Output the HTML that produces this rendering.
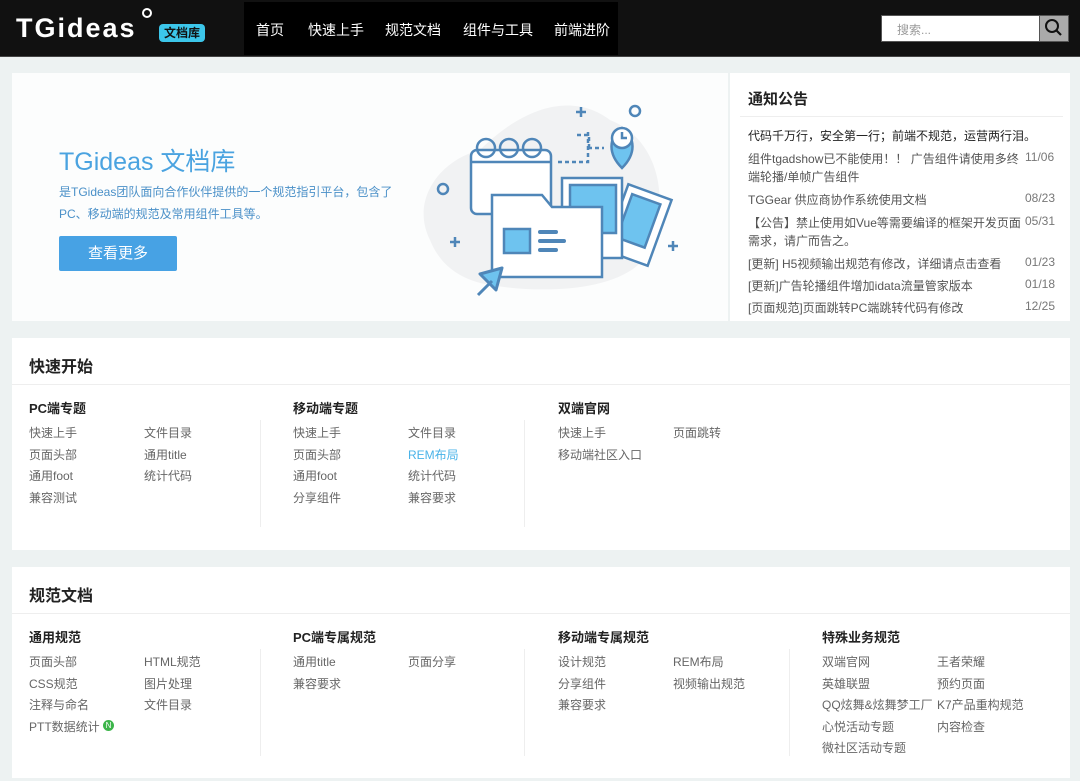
<!DOCTYPE html>
<html><head><meta charset="utf-8"><style>
*{margin:0;padding:0;box-sizing:border-box}
body{width:1080px;height:781px;background:#edf2f2;font-family:"Liberation Sans","Noto Sans CJK SC",sans-serif;position:relative;overflow:hidden;color:#333}
.a{position:absolute;white-space:nowrap}
.hd{position:absolute;left:0;top:0;width:1080px;height:57px;background:#111;border-bottom:1px solid #444}
.nav{position:absolute;left:244px;top:2px;width:374px;height:53px;background:#000}
.nav span{position:absolute;top:18px;color:#fff;font-size:14px}
.card{position:absolute;background:#fff}
.t{font-size:13px;font-weight:bold;color:#222}
.l{font-size:12px;color:#666}
.ttl{font-size:16px;font-weight:bold;color:#222}
.dv{position:absolute;width:1px;background:#eee}
.n{font-size:12px;color:#555;white-space:normal;width:280px}
.d{font-size:12px;color:#777}
</style></head><body>
<div class="hd">
<div class="a" style="left:16px;top:13px;color:#fff;font-size:27px;font-weight:bold;letter-spacing:2px">TGideas</div>
<div class="a" style="left:142px;top:8px;width:10px;height:10px;border:2px solid #fff;border-radius:50%"></div>
<div class="a" style="left:159px;top:24px;width:46px;height:18px;background:#3cc6ea;border-radius:4px;color:#111;font-size:12px;font-weight:bold;text-align:center;line-height:18px">文档库</div>
<div class="nav"><span style="left:12px">首页</span><span style="left:64px">快速上手</span><span style="left:141px">规范文档</span><span style="left:219px">组件与工具</span><span style="left:310px">前端进阶</span></div>
<div class="a" style="left:881px;top:15px;width:159px;height:27px;background:#fff;border:1px solid #555"></div>
<div class="a" style="left:897px;top:21px;color:#999;font-size:12px">搜索...</div>
<div class="a" style="left:1039px;top:15px;width:30px;height:27px;background:#aaa;border:1px solid #555"></div>
<svg class="a" style="left:1044px;top:18px" width="20" height="20" viewBox="0 0 20 20"><circle cx="8" cy="8" r="6" fill="none" stroke="#111" stroke-width="2"/><path d="M12.5 12.5L17 17" stroke="#111" stroke-width="2.2"/></svg>
</div>

<div class="card" style="left:12px;top:73px;width:716px;height:248px;background:#fcfdfd"></div>
<div class="a" style="left:59px;top:142px;font-size:25px;color:#4aa3e0">TGideas 文档库</div>
<div class="a" style="left:59px;top:181px;font-size:12px;color:#4a90c8;line-height:22px">是TGideas团队面向合作伙伴提供的一个规范指引平台，包含了<br>PC、移动端的规范及常用组件工具等。</div>
<div class="a" style="left:59px;top:236px;width:118px;height:35px;background:#47a2e4;border-radius:2px;color:#fff;font-size:15px;text-align:center;line-height:35px">查看更多</div>
<svg class="a" style="left:400px;top:80px" width="300" height="230" viewBox="0 0 300 230">
<path d="M30 160C10 120 40 80 80 70C120 30 170 10 210 40C260 60 270 120 250 170C230 210 150 215 90 205C60 200 40 185 30 160Z" fill="#f1f2f3"/>
<g fill="none" stroke="#4f86b8" stroke-width="2.5">
<path d="M181 27v10M176 32h10M55 157v10M50 162h10M273 161v10M268 166h10"/>
<circle cx="235" cy="31" r="5"/><circle cx="43" cy="109" r="5"/>
<rect x="71" y="70" width="80" height="64" rx="6" fill="#fff"/>
<path d="M71 82h80"/>
<circle cx="86" cy="68" r="9"/><circle cx="109" cy="68" r="9"/><circle cx="132" cy="68" r="9"/>
<path d="M158 82h30v-30M177 55h12v12M188 68h16" stroke-dasharray="4 3"/>
<path d="M222 88c-14-14-14-30 0-40c14 10 14 26 0 40z" fill="#6ec3ef"/>
<circle cx="222" cy="58" r="10" fill="#fff"/><path d="M222 52v6h5"/>
<rect x="215" y="110" width="46" height="70" transform="rotate(20 238 145)" fill="#fff"/>
<rect x="222" y="118" width="30" height="46" transform="rotate(20 238 145)" fill="#6ec3ef"/>
<rect x="162" y="98" width="60" height="80" fill="#fff"/><rect x="170" y="105" width="46" height="48" fill="#6ec3ef"/>
<path d="M92 115h50l10 12h50v70h-110z" fill="#fff"/>
<rect x="104" y="149" width="26" height="24" fill="#6ec3ef"/>
<path d="M140 152h16M140 161h24M140 170h16" stroke-width="4" stroke-linecap="round"/>
<path d="M78 215l14-14M102 188l-22 6l16 16z" fill="#6ec3ef" stroke-width="3" stroke-linejoin="round"/>
</g></svg>

<div class="card" style="left:730px;top:73px;width:340px;height:248px"></div>
<div class="a ttl" style="left:748px;top:88px;font-size:15px">通知公告</div>
<div class="a" style="left:740px;top:116px;width:323px;height:1px;background:#eee"></div>
<div class="a" style="left:748px;top:127px;font-size:12px;color:#222">代码千万行，安全第一行；前端不规范，运营两行泪。</div>
<div class="a n" style="left:748px;top:150px;line-height:18px">组件tgadshow已不能使用！！ 广告组件请使用多终端轮播/单帧广告组件</div><div class="a d" style="left:1025px;top:150px">11/06</div>
<div class="a n" style="left:748px;top:191px">TGGear 供应商协作系统使用文档</div><div class="a d" style="left:1025px;top:191px">08/23</div>
<div class="a n" style="left:748px;top:214px;line-height:18px">【公告】禁止使用如Vue等需要编译的框架开发页面需求，请广而告之。</div><div class="a d" style="left:1025px;top:214px">05/31</div>
<div class="a n" style="left:748px;top:255px">[更新] H5视频输出规范有修改，详细请点击查看</div><div class="a d" style="left:1025px;top:255px">01/23</div>
<div class="a n" style="left:748px;top:277px">[更新]广告轮播组件增加idata流量管家版本</div><div class="a d" style="left:1025px;top:277px">01/18</div>
<div class="a n" style="left:748px;top:299px">[页面规范]页面跳转PC端跳转代码有修改</div><div class="a d" style="left:1025px;top:299px">12/25</div>

<div class="card" style="left:12px;top:338px;width:1058px;height:212px"></div>
<div class="a ttl" style="left:29px;top:353px">快速开始</div>
<div class="a" style="left:12px;top:384px;width:1058px;height:1px;background:#eee"></div>
<div class="dv" style="left:260px;top:420px;height:107px"></div><div class="dv" style="left:524px;top:420px;height:107px"></div>
<div class="a t" style="left:29px;top:398px">PC端专题</div><div class="a t" style="left:293px;top:398px">移动端专题</div><div class="a t" style="left:558px;top:398px">双端官网</div>
<div class="a l" style="left:29px;top:423px;line-height:21.5px">快速上手<br>页面头部<br>通用foot<br>兼容测试</div>
<div class="a l" style="left:144px;top:423px;line-height:21.5px">文件目录<br>通用title<br>统计代码</div>
<div class="a l" style="left:293px;top:423px;line-height:21.5px">快速上手<br>页面头部<br>通用foot<br>分享组件</div>
<div class="a l" style="left:408px;top:423px;line-height:21.5px">文件目录<br><span style="color:#4ab3e8">REM布局</span><br>统计代码<br>兼容要求</div>
<div class="a l" style="left:558px;top:423px;line-height:21.5px">快速上手<br>移动端社区入口</div>
<div class="a l" style="left:673px;top:423px;line-height:21.5px">页面跳转</div>

<div class="card" style="left:12px;top:567px;width:1058px;height:211px"></div>
<div class="a ttl" style="left:29px;top:582px">规范文档</div>
<div class="a" style="left:12px;top:613px;width:1058px;height:1px;background:#eee"></div>
<div class="dv" style="left:260px;top:649px;height:107px"></div><div class="dv" style="left:524px;top:649px;height:107px"></div><div class="dv" style="left:789px;top:649px;height:107px"></div>
<div class="a t" style="left:29px;top:627px">通用规范</div><div class="a t" style="left:293px;top:627px">PC端专属规范</div><div class="a t" style="left:558px;top:627px">移动端专属规范</div><div class="a t" style="left:822px;top:627px">特殊业务规范</div>
<div class="a l" style="left:29px;top:652px;line-height:21.5px">页面头部<br>CSS规范<br>注释与命名<br>PTT数据统计 <span style="display:inline-block;width:11px;height:11px;border-radius:50%;background:#3cb54a;color:#fff;font-size:8px;text-align:center;line-height:11px;vertical-align:3px">N</span></div>
<div class="a l" style="left:144px;top:652px;line-height:21.5px">HTML规范<br>图片处理<br>文件目录</div>
<div class="a l" style="left:293px;top:652px;line-height:21.5px">通用title<br>兼容要求</div>
<div class="a l" style="left:408px;top:652px;line-height:21.5px">页面分享</div>
<div class="a l" style="left:558px;top:652px;line-height:21.5px">设计规范<br>分享组件<br>兼容要求</div>
<div class="a l" style="left:673px;top:652px;line-height:21.5px">REM布局<br>视频输出规范</div>
<div class="a l" style="left:822px;top:652px;line-height:21.5px">双端官网<br>英雄联盟<br>QQ炫舞&amp;炫舞梦工厂<br>心悦活动专题<br>微社区活动专题</div>
<div class="a l" style="left:937px;top:652px;line-height:21.5px">王者荣耀<br>预约页面<br>K7产品重构规范<br>内容检查</div>
</body></html>
